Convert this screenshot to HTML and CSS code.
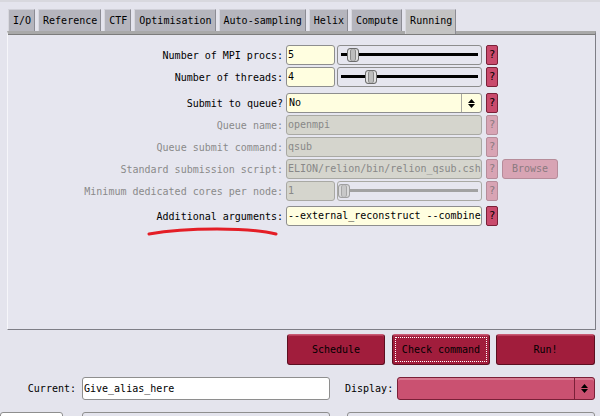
FILE: index.html
```html
<!DOCTYPE html>
<html>
<head>
<meta charset="utf-8">
<link rel="stylesheet" href="styles.css">
</head>
<body>
<div class="app">
  <nav class="tabs">
    <span class="tab">I/O</span>
    <span class="tab">Reference</span>
    <span class="tab">CTF</span>
    <span class="tab">Optimisation</span>
    <span class="tab">Auto-sampling</span>
    <span class="tab">Helix</span>
    <span class="tab">Compute</span>
    <span class="tab active">Running</span>
  </nav>
  <section class="panel">
    <div class="row">
      <span class="lbl">Number of MPI procs:</span>
      <span class="input num">5</span>
      <span class="slider"><span class="track"></span><span class="thumb" style="left:9px"></span></span>
      <span class="help">?</span>
    </div>
    <div class="row">
      <span class="lbl">Number of threads:</span>
      <span class="input num">4</span>
      <span class="slider"><span class="track"></span><span class="thumb" style="left:27px"></span></span>
      <span class="help">?</span>
    </div>
    <div class="row gap-big">
      <span class="lbl">Submit to queue?</span>
      <span class="input wide choice"><span class="choice-text">No</span><span class="arrows"><svg width="7" height="9" viewBox="0 0 7 9"><path d="M0 4 L3.5 0 L7 4 Z M0 5 L3.5 9 L7 5 Z" fill="#000"/></svg></span></span>
      <span class="help">?</span>
    </div>
    <div class="row dis">
      <span class="lbl">Queue name:</span>
      <span class="input wide">openmpi</span>
      <span class="help">?</span>
    </div>
    <div class="row dis">
      <span class="lbl">Queue submit command:</span>
      <span class="input wide">qsub</span>
      <span class="help">?</span>
    </div>
    <div class="row dis">
      <span class="lbl">Standard submission script:</span>
      <span class="input wide">ELION/relion/bin/relion_qsub.csh</span>
      <span class="help">?</span>
      <span class="browse">Browse</span>
    </div>
    <div class="row dis">
      <span class="lbl">Minimum dedicated cores per node:</span>
      <span class="input num">1</span>
      <span class="slider"><span class="track"></span><span class="thumb" style="left:0px"></span></span>
      <span class="help">?</span>
    </div>
    <div class="row gap-mid">
      <span class="lbl">Additional arguments:</span>
      <span class="input wide">--external_reconstruct --combine</span>
      <span class="help">?</span>
    </div>
    <svg class="scribble" width="140" height="14" viewBox="0 0 140 14"><path d="M2 8 Q 30 3 70 3 Q 110 3 129 8" stroke="#e41e26" stroke-width="3" fill="none" stroke-linecap="round"/></svg>
  </section>
  <div class="actions">
    <span class="btn">Schedule</span>
    <span class="btn focus"><span class="btn-in">Check command</span></span>
    <span class="btn run">Run!</span>
  </div>
  <div class="current">
    <span class="cur-lbl">Current:</span>
    <span class="cur-input">Give_alias_here</span>
    <span class="disp-lbl">Display:</span>
    <span class="disp"><span class="disp-body"></span><span class="arrows"><svg width="7" height="9" viewBox="0 0 7 9"><path d="M0 4 L3.5 0 L7 4 Z M0 5 L3.5 9 L7 5 Z" fill="#000"/></svg></span></span>
  </div>
  <div class="cutrow">
    <span class="cut a"></span>
    <span class="cut b"></span>
    <span class="cut c"></span>
  </div>
</div>
</body>
</html>
```

FILE: styles.css
```css
html, body {
  margin: 0;
  padding: 0;
  background: #e4e4ed;
  width: 600px;
  height: 416px;
  overflow: hidden;
}
.app {
  font-family: "DejaVu Sans Mono", "Liberation Mono", monospace;
  font-size: 10px;
  color: #000;
  padding-top: 7px;
  position: relative;
  border-top: 2px solid #d8d8de;
  box-sizing: border-box;
  height: 416px;
}
.tabs {
  display: flex;
  gap: 3px;
  padding-left: 8px;
  height: 22px;
  align-items: flex-end;
}
.tab {
  height: 22px;
  box-sizing: border-box;
  padding: 0 3px 0 4px;
  background: #b5b5bd;
  border-left: 1px solid #d8d8de;
  border-right: 1px solid #8c8c94;
  border-top: 1px solid #d0d0d8;
  line-height: 21px;
  white-space: nowrap;
}
.tab.active {
  height: 25px;
  margin-bottom: -3px;
  background: #c3c3c3;
  line-height: 22px;
  padding-bottom: 3px;
  position: relative;
  z-index: 1;
}
.panel {
  position: relative;
  margin-left: 7px;
  width: 589px;
  height: 299px;
  box-sizing: border-box;
  border-top: 3px solid #a9a9a9;
  box-shadow: inset 0 1px 0 #7c7c7c;
  border-left: 1px solid #f6f6fa;
  border-right: 1px solid #7e7e86;
  border-bottom: 1px solid #7e7e86;
  padding-top: 11px;
  background: #e6e6ef;
}
.row {
  display: flex;
  align-items: center;
  height: 20px;
  margin-bottom: 2px;
}
.row.gap-big { margin-top: 6px; }
.row.gap-mid { margin-top: 5px; }
.lbl {
  width: 275px;
  flex: none;
  text-align: right;
  margin-right: 3px;
  white-space: nowrap;
  overflow: hidden;
}
.input {
  height: 20px;
  box-sizing: border-box;
  border: 1px solid #8e8e8e;
  border-radius: 3px;
  background: #fffee0;
  padding: 0 1px;
  line-height: 18px;
  white-space: nowrap;
  overflow: hidden;
  flex: none;
}
.num { width: 49px; }
.wide { width: 196px; }
.choice {
  display: flex;
  padding: 0 0 0 2px;
}
.choice-text { flex: 1; }
.arrows {
  width: 19px;
  border-left: 1px solid #a8a8a0;
  display: flex;
  align-items: center;
  justify-content: center;
}
.slider {
  position: relative;
  width: 145px;
  height: 20px;
  box-sizing: border-box;
  border: 1px solid #8e8e8e;
  border-radius: 3px;
  margin-left: 2px;
  flex: none;
}
.track {
  position: absolute;
  left: 3px;
  right: 3px;
  top: 7px;
  height: 3px;
  background: #000;
}
.thumb {
  position: absolute;
  top: 2px;
  width: 12px;
  height: 14px;
  box-sizing: border-box;
  border: 1px solid #6c6c6c;
  border-radius: 3px;
  background: #bdbdbd;
  box-shadow: inset 2px 0 0 #e0e0e0, inset -2px 0 0 #e0e0e0, inset 3px 0 0 #8a8a8a, inset -3px 0 0 #8a8a8a;
}
.help {
  width: 12px;
  height: 20px;
  box-sizing: border-box;
  margin-left: 4px;
  background: #c94a6c;
  border: 1px solid #7a2038;
  border-radius: 2px;
  text-align: center;
  line-height: 18px;
  font-size: 11px;
  flex: none;
}
.dis .lbl { color: #8a8a8a; }
.dis .input {
  background: #d5d5cd;
  border-color: #a9a9a3;
  color: #888;
}
.dis .help {
  background: #d8a4b4;
  border-color: #b68c9a;
  color: #8a7a80;
}
.dis .slider { border-color: #a9a9a3; }
.dis .track { background: #a2a2a2; }
.dis .thumb {
  border-color: #a0a0a0;
  background: #c8c8c8;
  box-shadow: inset 2px 0 0 #dadada, inset -2px 0 0 #dadada, inset 3px 0 0 #a6a6a6, inset -3px 0 0 #a6a6a6;
}
.browse {
  width: 56px;
  height: 20px;
  box-sizing: border-box;
  margin-left: 4px;
  background: #d8a4b4;
  border: 1px solid #b68c9a;
  border-radius: 3px;
  color: #8a7a80;
  text-align: center;
  line-height: 18px;
  flex: none;
}
.scribble {
  position: absolute;
  left: 139px;
  top: 192px;
}
.actions {
  display: flex;
  justify-content: flex-end;
  margin-top: 4px;
  padding-right: 5px;
  height: 31px;
}
.btn {
  width: 98px;
  height: 31px;
  box-sizing: border-box;
  margin-left: 7px;
  background: #a11d3c;
  border: 1px solid #5c0f20;
  border-top-color: #c85a74;
  border-radius: 3px;
  box-shadow: inset 0 1px 0 #b8405c;
  text-align: center;
  line-height: 29px;
}
.btn.run { width: 99px; margin-left: 6px; }
.btn.focus {
  padding: 2px;
}
.btn-in {
  display: block;
  height: 100%;
  box-sizing: border-box;
  border: 1px dotted #fff;
  line-height: 23px;
}
.current {
  display: flex;
  align-items: center;
  margin-top: 12px;
  height: 23px;
}
.cur-lbl {
  width: 76px;
  text-align: right;
  margin-right: 6px;
}
.cur-input {
  width: 248px;
  height: 23px;
  box-sizing: border-box;
  border: 1px solid #8e8e8e;
  border-radius: 3px;
  background: #fff;
  padding: 0 1px;
  line-height: 21px;
}
.disp-lbl {
  margin-left: 15px;
  width: 48px;
}
.disp {
  display: flex;
  margin-left: 4px;
  width: 198px;
  height: 23px;
  box-sizing: border-box;
  border: 1px solid #7a2038;
  border-radius: 3px;
  background: #ca5171;
  box-shadow: inset 0 2px 0 #d87890;
}
.disp-body { flex: 1; }
.disp .arrows { border-left: 1px solid #7a2038; }
.cutrow {
  display: flex;
  margin-top: 12px;
  height: 20px;
}
.cut {
  height: 20px;
  box-sizing: border-box;
  border: 1px solid #8e8e8e;
  border-radius: 3px;
  background: #e4e4ed;
}
.cut.a { width: 63px; margin-left: 0; background: #fff; }
.cut.b { width: 248px; margin-left: 19px; }
.cut.c { width: 248px; margin-left: 17px; }
```
